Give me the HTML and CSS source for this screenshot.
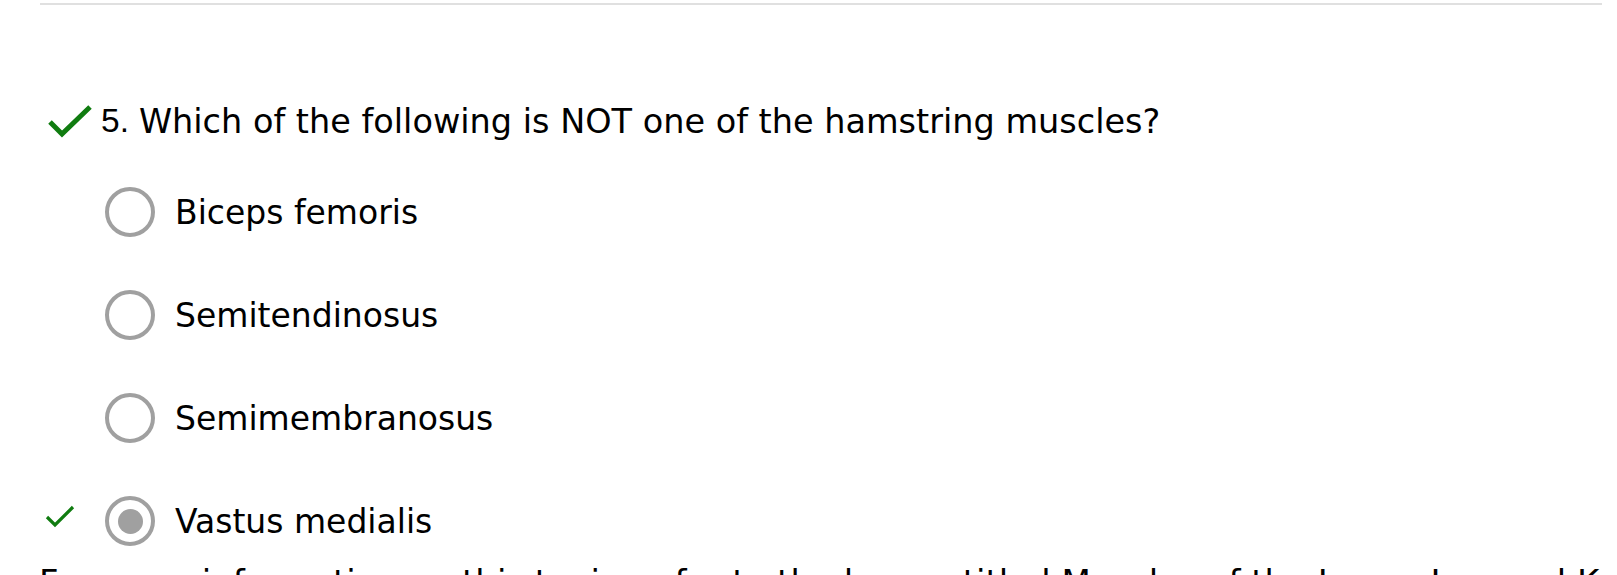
FILE: index.html
```html
<!DOCTYPE html>
<html lang="en">
<head>
<meta charset="utf-8">
<title>Quiz question</title>
<link rel="stylesheet" href="styles.css">
</head>
<body>
<div class="page">
  <hr class="divider">
  <div class="question">
    <svg class="q-check" viewBox="0 0 46 34" width="46" height="34" aria-hidden="true">
      <polyline points="3,18 15,30 43,3" fill="none" stroke="#107c10" stroke-width="5" stroke-linecap="butt" stroke-linejoin="miter"/>
    </svg>
    <span class="q-num">5.</span>
    <span class="q-text">Which of the following is NOT one of the hamstring muscles?</span>
  </div>
  <ul class="options">
    <li class="option">
      <span class="marker"></span>
      <span class="radio"></span>
      <span class="label">Biceps femoris</span>
    </li>
    <li class="option">
      <span class="marker"></span>
      <span class="radio"></span>
      <span class="label">Semitendinosus</span>
    </li>
    <li class="option">
      <span class="marker"></span>
      <span class="radio"></span>
      <span class="label">Semimembranosus</span>
    </li>
    <li class="option">
      <span class="marker">
        <svg class="a-check" viewBox="0 0 30 24" width="30" height="24" aria-hidden="true">
          <polyline points="2,13 10,21 28,3" fill="none" stroke="#107c10" stroke-width="3.2"/>
        </svg>
      </span>
      <span class="radio checked"></span>
      <span class="label">Vastus medialis</span>
    </li>
  </ul>
  <p class="info">For more information on this topic, refer to the lesson titled Muscles of the Lower Leg and Knee.</p>
</div>
</body>
</html>
```

FILE: styles.css
```css
html, body {
  margin: 0;
  padding: 0;
  background: #ffffff;
}

body {
  font-family: "DejaVu Sans", Verdana, sans-serif;
  color: #000000;
  overflow: hidden;
}

.page {
  padding: 3px 15px 0 40px;
}

.divider {
  margin: 0;
  border: 0;
  height: 2px;
  background: #e0e0e0;
}

.question {
  display: flex;
  align-items: center;
  height: 50px;
  margin-top: 91px;
  font-size: 33.5px;
}

.q-check {
  margin-left: 7px;
  margin-right: 8px;
  flex: none;
}

.q-num {
  font-family: "Liberation Sans", Arial, sans-serif;
  margin-right: 10px;
}

.options {
  list-style: none;
  margin: 0;
  padding: 0;
  margin-top: 41px;
  display: flex;
  flex-direction: column;
  gap: 53px;
}

.option {
  display: flex;
  align-items: center;
  height: 50px;
  font-size: 33px;
}

.marker {
  width: 65px;
  flex: none;
  display: flex;
  align-items: center;
}

.a-check {
  margin-left: 5px;
  margin-top: -10px;
}

.radio {
  box-sizing: border-box;
  width: 50px;
  height: 50px;
  border: 4.5px solid #a0a0a0;
  border-radius: 50%;
  flex: none;
  display: flex;
  align-items: center;
  justify-content: center;
  margin-right: 20px;
}

.radio.checked::after {
  content: "";
  width: 25px;
  height: 25px;
  border-radius: 50%;
  background: #a0a0a0;
}

.info {
  margin: 16px 0 0 -1px;
  font-size: 34px;
  white-space: nowrap;
}
```
